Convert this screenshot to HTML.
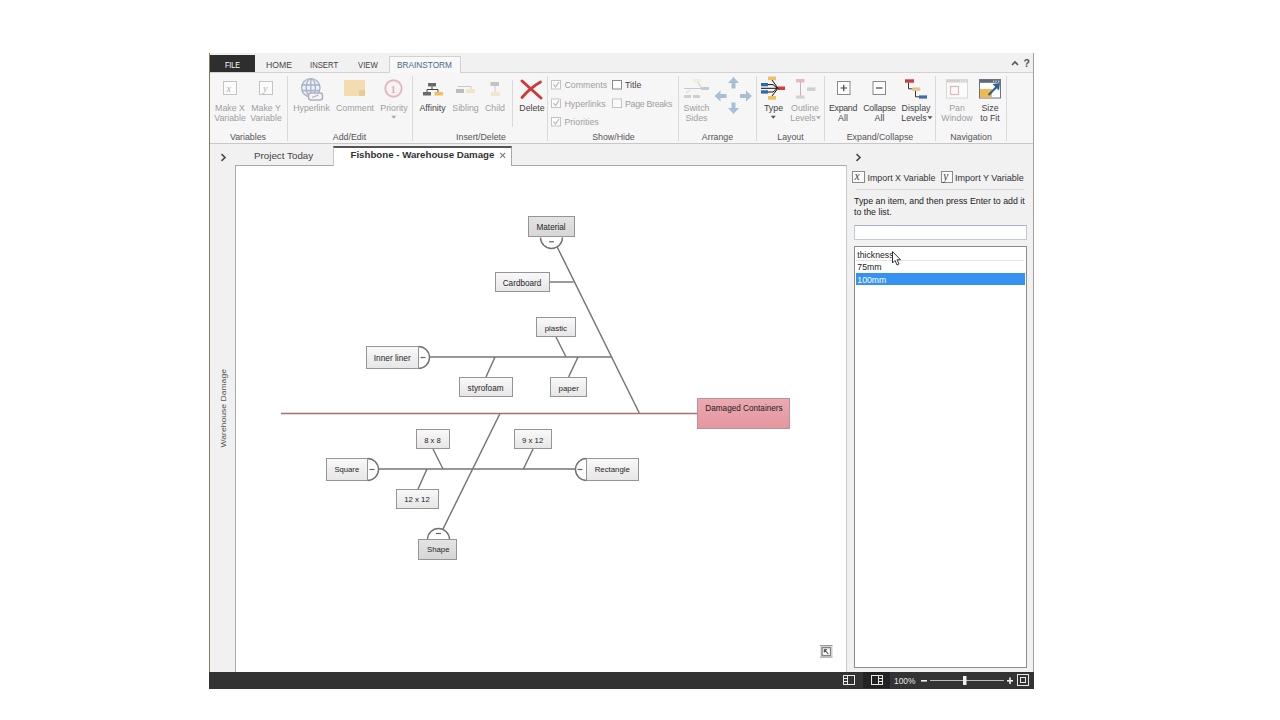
<!DOCTYPE html>
<html><head><meta charset="utf-8">
<style>
html,body{margin:0;padding:0;width:1280px;height:720px;overflow:hidden;background:#fff;font-family:"Liberation Sans",sans-serif;}
.a{position:absolute;}
.t{position:absolute;line-height:1;white-space:nowrap;color:#444;}
.rb{font-size:8.8px;color:#9e9e9e;}
.rbd{font-size:8.8px;color:#444;}
.gl{font-size:8.8px;color:#555;}
.sep{position:absolute;width:1px;background:#dadada;top:76px;height:65px;}
</style></head>
<body>
<!-- window frame -->
<div class="a" style="left:209px;top:53px;width:824px;height:635px;background:#f3f3f3;"></div>
<div class="a" style="left:209px;top:53px;width:1px;height:636px;background:#8a7a60;"></div>
<div class="a" style="left:1033px;top:53px;width:1px;height:636px;background:#a89f98;"></div>
<!-- tab row -->
<div class="a" style="left:210px;top:53px;width:823px;height:19px;background:#f1f1f1;"></div>
<div class="a" style="left:210px;top:72px;width:823px;height:1px;background:#d2d2d2;"></div>
<div class="a" style="left:210px;top:55px;width:45px;height:17px;background:#2e2e2e;"></div>
<div class="t" style="left:224.5px;top:60px;font-size:9.5px;color:#fff;transform:scaleX(0.75);transform-origin:0 0;">FILE</div>
<div class="t" style="left:265.5px;top:60px;font-size:9.5px;color:#444;transform:scaleX(0.91);transform-origin:0 0;">HOME</div>
<div class="t" style="left:310px;top:60px;font-size:9.5px;color:#444;transform:scaleX(0.81);transform-origin:0 0;">INSERT</div>
<div class="t" style="left:357.5px;top:60px;font-size:9.5px;color:#444;transform:scaleX(0.82);transform-origin:0 0;">VIEW</div>
<div class="a" style="left:389px;top:56px;width:70px;height:17px;background:#f8f8f8;border:1px solid #d2d2d2;border-bottom:none;"></div>
<div class="t" style="left:396.5px;top:60px;font-size:9.5px;color:#4a6890;transform:scaleX(0.87);transform-origin:0 0;">BRAINSTORM</div>
<svg class="a" style="left:1010px;top:59px;" width="10" height="8"><path d="M2 6 L5 3 L8 6" stroke="#555" stroke-width="1.6" fill="none"/></svg>
<div class="t" style="left:1023.6px;top:58.3px;font-size:10.5px;color:#505050;font-weight:bold;">?</div>
<!-- ribbon -->
<div class="a" style="left:210px;top:73px;width:823px;height:70px;background:#f6f6f6;"></div>
<div class="a" style="left:210px;top:143px;width:823px;height:1px;background:#c8c8c8;"></div>
<div class="sep" style="left:287px;"></div>
<div class="sep" style="left:412px;"></div>
<div class="sep" style="left:512px;top:80px;height:47px;"></div>
<div class="sep" style="left:547px;"></div>
<div class="sep" style="left:678px;"></div>
<div class="sep" style="left:756px;"></div>
<div class="sep" style="left:824px;"></div>
<div class="sep" style="left:935px;"></div>
<div class="sep" style="left:1006px;"></div>

<svg class="a" style="left:0;top:0;" width="1280" height="150" viewBox="0 0 1280 150">
<!-- Make X / Y -->
<rect x="223.5" y="81.5" width="13" height="13" fill="#fbfbfb" stroke="#c4c4c4"/>
<text x="226.5" y="91.5" font-family="Liberation Serif" font-style="italic" font-size="10" fill="#b0b0b0">x</text>
<rect x="259.5" y="81.5" width="13" height="13" fill="#fbfbfb" stroke="#c4c4c4"/>
<text x="263" y="91.5" font-family="Liberation Serif" font-style="italic" font-size="10" fill="#b0b0b0">y</text>
<!-- Hyperlink globe -->
<g stroke="#a9b5c6" stroke-width="1.4" fill="none">
<circle cx="310.8" cy="87.8" r="9.2" fill="#eaf1f8"/>
<ellipse cx="310.8" cy="87.8" rx="4.6" ry="9.2"/>
<line x1="310.8" y1="78.6" x2="310.8" y2="97"/>
<line x1="301.8" y1="85" x2="319.8" y2="85" stroke-width="1.6"/><line x1="301.8" y1="90.6" x2="319.8" y2="90.6" stroke-width="1.6"/>
</g>
<rect x="308.5" y="93" width="14" height="7" rx="2.5" fill="#f4f4f4" stroke="#b4aec4" stroke-width="1.5"/>
<path d="M312 97.5 L318.5 95" stroke="#b4aec4" stroke-width="1.3"/>
<!-- Comment -->
<rect x="344" y="80" width="21" height="16" fill="#f2dcb0"/>
<rect x="359" y="90" width="6" height="6" fill="#e8cc98"/>
<!-- Priority -->
<circle cx="393.5" cy="88.5" r="8.2" fill="#f8f2f2" stroke="#e2b6bc" stroke-width="1.9"/>
<text x="390.8" y="92.6" font-family="Liberation Serif" font-size="10" font-weight="bold" fill="#d4b0b4">1</text>
<path d="M391.3 115.8 l5 0 l-2.5 3z" fill="#a8a8a8"/>
<!-- Affinity -->
<rect x="428" y="83" width="8" height="3.5" fill="#6a6a6a"/>
<rect x="423" y="92" width="8" height="3.5" fill="#6a6a6a"/>
<rect x="434.5" y="92" width="8.5" height="3.5" fill="#f0c060"/>
<path d="M432 86.5 V89.5 M427 92 V89.5 H438 V92" stroke="#333" stroke-width="0.9" fill="none"/>
<!-- Sibling -->
<rect x="456" y="89" width="8" height="4" fill="#bdbdbd"/>
<rect x="466" y="89" width="9" height="4" fill="#f2e4c4"/>
<path d="M458 86.5 H471 V89" stroke="#c4c4c4" stroke-width="0.9" fill="none"/>
<!-- Child -->
<rect x="490.5" y="82" width="8.5" height="4" fill="#c4c4c4"/>
<rect x="491" y="92" width="9" height="4" fill="#f2e6cc"/>
<path d="M495 86 V92" stroke="#c8c8c8" stroke-width="0.9"/>
<!-- Delete -->
<path d="M522 81 Q531 89 541 98" stroke="#cc3b3b" stroke-width="3" fill="none" stroke-linecap="round"/>
<path d="M540.5 82 Q530 88 522 97.5" stroke="#cc3b3b" stroke-width="2.8" fill="none" stroke-linecap="round"/>
<!-- checkboxes -->
<g fill="#fafafa" stroke="#c4c4c4">
<rect x="551.5" y="80.5" width="9" height="8.5"/><rect x="551.5" y="99" width="9" height="8.5"/><rect x="551.5" y="117.5" width="9" height="8.5"/>
<rect x="612.5" y="99" width="9" height="8.5"/>
</g>
<rect x="612.5" y="80.5" width="9" height="8.5" fill="#fff" stroke="#8a8a8a"/>
<g stroke="#b4b4b4" stroke-width="1.1" fill="none">
<path d="M553.5 84.5 l2 2.5 l3.5 -5"/><path d="M553.5 103 l2 2.5 l3.5 -5"/><path d="M553.5 121.5 l2 2.5 l3.5 -5"/>
</g>
<!-- Switch sides -->
<g stroke="#c8c8c8" stroke-width="1" fill="none">
<line x1="684" y1="88.5" x2="707" y2="88.5"/>
<line x1="696.5" y1="80" x2="701.5" y2="88"/>
</g>
<rect x="693" y="79" width="8" height="3" fill="#f0f0d8"/>
<rect x="701" y="87" width="8" height="3" fill="#c8c8c8"/>
<rect x="684" y="95" width="7" height="3" fill="#cfcfcf"/><rect x="693" y="95" width="7" height="3" fill="#cfcfcf"/>
<line x1="686" y1="93" x2="690" y2="90" stroke="#d4d4d4"/>
<!-- arrows -->
<g fill="#a9bfd6">
<path d="M733.5 77 L739 83 L735.5 83 L735.5 88.5 L731.5 88.5 L731.5 83 L728 83 Z"/>
<path d="M733.5 114 L739 108 L735.5 108 L735.5 102.5 L731.5 102.5 L731.5 108 L728 108 Z"/>
<path d="M714.5 96 L720.5 90.5 L720.5 94 L726.5 94 L726.5 98 L720.5 98 L720.5 101.5 Z"/>
<path d="M752 96 L746 90.5 L746 94 L740 94 L740 98 L746 98 L746 101.5 Z"/>
</g>
<!-- Type -->
<rect x="768" y="76.5" width="8" height="3.7" fill="#f0c060"/>
<rect x="768" y="96" width="8" height="3.7" fill="#f0c060"/>
<rect x="761" y="83" width="7" height="3.3" fill="#2f6aa8"/>
<rect x="761" y="90.3" width="7" height="3.3" fill="#2f6aa8"/>
<rect x="778" y="86.5" width="7" height="3.5" fill="#d63a3a"/>
<g stroke="#111" stroke-width="1" fill="none">
<line x1="761" y1="88.3" x2="778" y2="88.3"/>
<path d="M772 80 L778 88.3 L772 96"/>
<path d="M768 84.6 H773 L777 88"/>
<path d="M768 92 H773 L777 88.6"/>
</g>
<path d="M770.8 115.8 l5 0 l-2.5 3z" fill="#555"/>
<!-- Outline levels -->
<rect x="796" y="79" width="8.5" height="3.5" fill="#e8b8c0"/>
<line x1="800.5" y1="82" x2="800.5" y2="96" stroke="#c8b0b4"/>
<rect x="807" y="87.4" width="8.5" height="3.5" fill="#cfcfcf"/>
<rect x="796" y="95.5" width="8.5" height="3.2" fill="#d4d4d4"/>
<path d="M816 116.3 l5 0 l-2.5 3z" fill="#aaa"/>
<!-- Expand / Collapse -->
<rect x="837.5" y="81.5" width="12.5" height="13" fill="#fdfdfd" stroke="#888"/>
<path d="M840.5 88 H847 M843.75 84.8 V91.2" stroke="#444" stroke-width="1.2"/>
<rect x="873" y="81.5" width="12.5" height="13" fill="#fdfdfd" stroke="#888"/>
<path d="M876 88 H882.5" stroke="#444" stroke-width="1.2"/>
<!-- Display levels -->
<rect x="905" y="79.3" width="9" height="3.4" fill="#c84040"/>
<rect x="912.3" y="87.4" width="8" height="3.5" fill="#ecc488"/>
<rect x="919" y="95.4" width="8" height="3.2" fill="#3b6cb0"/>
<path d="M908.5 82.7 V88.8 H912.3 M915.5 90.9 V96.8 H919" stroke="#222" stroke-width="0.9" fill="none"/>
<path d="M927.5 116.3 l5 0 l-2.5 3z" fill="#555"/>
<!-- Pan window -->
<rect x="946.5" y="79.5" width="21" height="18.5" fill="#fbfbfb" stroke="#d8d8d8"/>
<rect x="947" y="80" width="20" height="2.5" fill="#d0d0d0"/>
<rect x="950.5" y="86.5" width="8" height="8" fill="none" stroke="#e0b8b8" stroke-width="1.2"/><g fill="#f4f4f4"><rect x="960" y="80.5" width="1.2" height="1.2"/><rect x="962.5" y="80.5" width="1.2" height="1.2"/><rect x="965" y="80.5" width="1.2" height="1.2"/></g>
<!-- Size to fit -->
<rect x="979.5" y="79.5" width="21" height="18.5" fill="#fff" stroke="#6a7480"/>
<rect x="980" y="80" width="20" height="2.8" fill="#5d6b78"/>
<rect x="980" y="89" width="12" height="8.5" fill="#f0b850"/>
<path d="M988.5 95 L997 86.5" stroke="#2d5f98" stroke-width="2.2"/>
<path d="M1000 83 L992.5 84 L999 90.5 Z" fill="#2d5f98"/>
<g fill="#e8e8e8"><rect x="993" y="80.6" width="1.2" height="1.2"/><rect x="995.5" y="80.6" width="1.2" height="1.2"/><rect x="998" y="80.6" width="1.2" height="1.2"/></g>
</svg>
<!-- ribbon text -->
<div class="t rb" style="left:180.0px;top:104.05px;width:100px;text-align:center;">Make X</div>
<div class="t rb" style="left:180.0px;top:113.55px;width:100px;text-align:center;">Variable</div>
<div class="t rb" style="left:216.0px;top:104.05px;width:100px;text-align:center;">Make Y</div>
<div class="t rb" style="left:216.0px;top:113.55px;width:100px;text-align:center;">Variable</div>
<div class="t gl" style="left:198.0px;top:132.65px;width:100px;text-align:center;">Variables</div>
<div class="t rb" style="left:261.5px;top:104.05px;width:100px;text-align:center;">Hyperlink</div>
<div class="t rb" style="left:305.0px;top:104.05px;width:100px;text-align:center;">Comment</div>
<div class="t rb" style="left:344.0px;top:104.05px;width:100px;text-align:center;">Priority</div>
<div class="t gl" style="left:299.5px;top:132.65px;width:100px;text-align:center;">Add/Edit</div>
<div class="t rbd" style="left:382.5px;top:104.05px;width:100px;text-align:center;">Affinity</div>
<div class="t rb" style="left:415.5px;top:104.05px;width:100px;text-align:center;">Sibling</div>
<div class="t rb" style="left:445.0px;top:104.05px;width:100px;text-align:center;">Child</div>
<div class="t rbd" style="left:482.0px;top:104.05px;width:100px;text-align:center;">Delete</div>
<div class="t gl" style="left:431.0px;top:132.65px;width:100px;text-align:center;">Insert/Delete</div>
<div class="t rb" style="left:564.5px;top:81.25px;">Comments</div>
<div class="t rb" style="left:564.5px;top:99.75px;">Hyperlinks</div>
<div class="t rb" style="left:564.5px;top:118.25px;">Priorities</div>
<div class="t rbd" style="left:625.0px;top:81.25px;">Title</div>
<div class="t rb" style="left:625.0px;top:99.75px;letter-spacing:-0.3px;">Page Breaks</div>
<div class="t gl" style="left:563.5px;top:132.65px;width:100px;text-align:center;">Show/Hide</div>
<div class="t rb" style="left:646.5px;top:104.05px;width:100px;text-align:center;">Switch</div>
<div class="t rb" style="left:646.5px;top:113.55px;width:100px;text-align:center;">Sides</div>
<div class="t gl" style="left:667.5px;top:132.65px;width:100px;text-align:center;">Arrange</div>
<div class="t rbd" style="left:723.5px;top:104.05px;width:100px;text-align:center;">Type</div>
<div class="t rb" style="left:755.0px;top:104.05px;width:100px;text-align:center;">Outline</div>
<div class="t rb" style="left:753.0px;top:113.55px;width:100px;text-align:center;">Levels</div>
<div class="t gl" style="left:740.5px;top:132.65px;width:100px;text-align:center;">Layout</div>
<div class="t rbd" style="left:793.0px;top:104.05px;width:100px;text-align:center;letter-spacing:-0.3px;">Expand</div>
<div class="t rbd" style="left:793.0px;top:113.55px;width:100px;text-align:center;">All</div>
<div class="t rbd" style="left:829.5px;top:104.05px;width:100px;text-align:center;letter-spacing:-0.2px;">Collapse</div>
<div class="t rbd" style="left:829.5px;top:113.55px;width:100px;text-align:center;">All</div>
<div class="t rbd" style="left:866.0px;top:104.05px;width:100px;text-align:center;">Display</div>
<div class="t rbd" style="left:864.0px;top:113.55px;width:100px;text-align:center;">Levels</div>
<div class="t gl" style="left:830.0px;top:132.65px;width:100px;text-align:center;">Expand/Collapse</div>
<div class="t rb" style="left:907.0px;top:104.05px;width:100px;text-align:center;">Pan</div>
<div class="t rb" style="left:907.0px;top:113.55px;width:100px;text-align:center;">Window</div>
<div class="t rbd" style="left:940.0px;top:104.05px;width:100px;text-align:center;">Size</div>
<div class="t rbd" style="left:940.0px;top:113.55px;width:100px;text-align:center;">to Fit</div>
<div class="t gl" style="left:921.0px;top:132.65px;width:100px;text-align:center;">Navigation</div>

<!-- doc tab row -->
<div class="a" style="left:210px;top:144px;width:823px;height:21px;background:#f1f1f1;"></div>
<svg class="a" style="left:218.6px;top:152px;" width="10" height="11"><path d="M2.5 2.2 L6 5.5 L2.5 8.8" stroke="#4a4a4a" stroke-width="1.6" fill="none"/></svg>
<div class="t" style="left:254px;top:150.5px;font-size:9.8px;color:#444;">Project Today</div>
<div class="a" style="left:333px;top:146px;width:177px;height:18px;background:#fff;border-left:1px solid #c8c8c8;border-right:1px solid #a8a8a8;border-top:2px solid #555;z-index:2;"></div>
<div class="t" style="left:350.5px;top:149.8px;font-size:9.7px;color:#333;font-weight:bold;z-index:3;">Fishbone - Warehouse Damage</div>
<svg class="a" style="left:498px;top:151px;z-index:3;" width="10" height="9"><path d="M2.2 1.8 L7.2 6.8 M7.2 1.8 L2.2 6.8" stroke="#7a7a7a" stroke-width="1.1"/></svg>

<!-- left strip -->
<div class="a" style="left:210px;top:165px;width:25px;height:507px;background:#f1f1f1;"></div>
<div class="t" style="left:183.8px;top:404.2px;width:79px;font-size:8.6px;color:#555;transform:rotate(-90deg) scaleY(0.8);transform-origin:center;text-align:center;">Warehouse Damage</div>

<!-- canvas -->
<div class="a" style="left:235px;top:165px;width:610px;height:507px;background:#fff;border-left:1px solid #a8a8a8;border-top:1px solid #a8a8a8;border-right:1px solid #c8c8c8;"></div>


<!-- diagram -->
<svg class="a" style="left:0;top:0;" width="1280" height="720" viewBox="0 0 1280 720">
<defs>
<linearGradient id="gb" x1="0" y1="0" x2="0" y2="1"><stop offset="0" stop-color="#f9f9f9"/><stop offset="1" stop-color="#e6e6e6"/></linearGradient>
<linearGradient id="gd" x1="0" y1="0" x2="0" y2="1"><stop offset="0" stop-color="#e4e4e4"/><stop offset="1" stop-color="#d6d6d6"/></linearGradient>
<linearGradient id="gp" x1="0" y1="0" x2="0" y2="1"><stop offset="0" stop-color="#eaa9b1"/><stop offset="1" stop-color="#e6969f"/></linearGradient>
</defs>
<g fill="none" stroke="#747474" stroke-width="1.45">
<line x1="557.2" y1="247" x2="639.5" y2="413.5"/>
<line x1="500" y1="413.5" x2="443" y2="529"/>
<line x1="550" y1="282" x2="573.5" y2="282"/>
<line x1="429" y1="357" x2="611.5" y2="357"/>
<line x1="556" y1="337" x2="566" y2="357"/>
<line x1="486" y1="377" x2="495" y2="357"/>
<line x1="568.6" y1="377" x2="578" y2="357"/>
<line x1="378" y1="469" x2="576" y2="469"/>
<line x1="433" y1="449" x2="443" y2="469"/>
<line x1="418" y1="489" x2="427" y2="469"/>
<line x1="533" y1="449" x2="523.4" y2="469"/>
</g>
<line x1="281" y1="413.5" x2="697" y2="413.5" stroke="#a86e76" stroke-width="1.4"/>
<g stroke="#727272" stroke-width="1.4">
<path d="M540.5 237.5 A11 11 0 0 0 562.5 237.5" fill="#fff"/>
<path d="M427.5 539.5 A11 11 0 0 1 449.5 539.5" fill="#fff"/>
<path d="M418.5 346.5 A11 11 0 0 1 418.5 368.5" fill="#fff"/>
<path d="M367.5 458.5 A11 11 0 0 1 367.5 480.5" fill="#fff"/>
<path d="M586.5 458.5 A11 11 0 0 0 586.5 480.5" fill="#fff"/>
</g>
<g stroke="#959595" stroke-width="1">
<rect x="528.5" y="216.5" width="46" height="20" fill="url(#gd)"/>
<rect x="418.5" y="539.5" width="38" height="20" fill="url(#gd)"/>
<rect x="495.5" y="272.5" width="54" height="19" fill="url(#gb)"/>
<rect x="366.5" y="346.5" width="52" height="22" fill="url(#gb)"/>
<rect x="536.5" y="317.5" width="39" height="19" fill="url(#gb)"/>
<rect x="459.5" y="377.5" width="53" height="19" fill="url(#gb)"/>
<rect x="550.5" y="377.5" width="36" height="19" fill="url(#gb)"/>
<rect x="326.5" y="458.5" width="41" height="22" fill="url(#gb)"/>
<rect x="586.5" y="458.5" width="52" height="22" fill="url(#gb)"/>
<rect x="416.5" y="429.5" width="33" height="19" fill="url(#gb)"/>
<rect x="396.5" y="489.5" width="42" height="19" fill="url(#gb)"/>
<rect x="514.5" y="429.5" width="37" height="19" fill="url(#gb)"/>
<rect x="697.5" y="398.5" width="92" height="30" fill="url(#gp)" stroke="#c09098"/>
</g>
<g stroke="#666" stroke-width="1.2">
<line x1="549" y1="241.8" x2="554" y2="241.8"/>
<line x1="436" y1="533.5" x2="441" y2="533.5"/>
<line x1="420.5" y1="357.5" x2="425.5" y2="357.5"/>
<line x1="369.5" y1="469.5" x2="374.5" y2="469.5"/>
<line x1="577.5" y1="469.5" x2="582.5" y2="469.5"/>
</g>
<g font-family="Liberation Sans" fill="#262626" font-size="8.2">
<text x="536.5" y="229.5">Material</text>
<text x="427" y="552.0" font-size="7.8">Shape</text>
<text x="502.7" y="285.5">Cardboard</text>
<text x="373.8" y="361" font-size="8.3">Inner liner</text>
<text x="544.7" y="330.5" font-size="7.9">plastic</text>
<text x="467.6" y="390.8">styrofoam</text>
<text x="558.6" y="390.5" font-size="7.9">paper</text>
<text x="334.4" y="471.9" font-size="7.7">Square</text>
<text x="594.7" y="471.9" font-size="7.8">Rectangle</text>
<text x="424.2" y="442.5" font-size="7.7">8 x 8</text>
<text x="404.2" y="502.1" font-size="7.8">12 x 12</text>
<text x="522" y="442.5" font-size="7.8">9 x 12</text>
<text x="705.3" y="410.8" font-size="8.2" fill="#1e1e1e">Damaged Containers</text>
</g>
<rect x="820" y="645" width="12.5" height="1.3" fill="#9a9a9a"/><rect x="820" y="656.4" width="12.5" height="1.3" fill="#9a9a9a"/>
<rect x="820.3" y="646.3" width="12" height="10.1" fill="#f6f6f6" stroke="#d8d8d8" stroke-width="0.6"/>
<rect x="822" y="647.6" width="8.6" height="8" fill="#fff" stroke="#858585" stroke-width="1.5"/>
<path d="M824.3 649.6 L828.3 653.8 M824.3 649.6 h2.6 M824.3 649.6 v2.8" stroke="#555" stroke-width="1.1" fill="none"/>
</svg>

<!-- right panel -->
<div class="a" style="left:847px;top:165px;width:186px;height:507px;background:#f1f1f1;"></div>
<svg class="a" style="left:854.3px;top:152.3px;" width="10" height="11"><path d="M2.5 2.2 L6 5.5 L2.5 8.8" stroke="#4a4a4a" stroke-width="1.6" fill="none"/></svg>

<!-- status bar -->
<div class="a" style="left:209px;top:672px;width:825px;height:17px;background:#333;"></div>

<!-- right panel content -->
<div class="a" style="left:852px;top:171px;width:10.5px;height:10px;border:1px solid #8a8a8a;background:#fafafa;"></div>
<div class="t" style="left:854.6px;top:170.6px;font-size:11.5px;font-family:'Liberation Serif',serif;font-style:italic;color:#444;">x</div>
<div class="t" style="left:867.5px;top:174.3px;font-size:8.9px;color:#333;">Import X Variable</div>
<div class="a" style="left:940.5px;top:171px;width:10.5px;height:10px;border:1px solid #8a8a8a;background:#fafafa;"></div>
<div class="t" style="left:943.3px;top:170.6px;font-size:11.5px;font-family:'Liberation Serif',serif;font-style:italic;color:#444;">y</div>
<div class="t" style="left:955px;top:174.3px;font-size:9.05px;color:#333;">Import Y Variable</div>
<div class="a" style="left:856px;top:189px;width:168px;height:1px;background:#d6d6d6;"></div>
<div class="t" style="left:854px;top:196.5px;font-size:8.8px;color:#222;">Type an item, and then press Enter to add it</div>
<div class="t" style="left:854px;top:207.7px;font-size:8.8px;color:#222;">to the list.</div>
<div class="a" style="left:854px;top:225px;width:171px;height:13px;background:#fff;border:1px solid #c4c8d0;border-top-color:#a8b4c4;"></div>
<div class="a" style="left:854px;top:246px;width:171px;height:420px;background:#fff;border:1px solid #8c8c8c;"></div>
<div class="t" style="left:857.3px;top:251px;font-size:8.7px;color:#222;">thickness</div>
<div class="a" style="left:856px;top:260px;width:168px;height:1px;background:#e4e4e4;"></div>
<div class="t" style="left:857.3px;top:263px;font-size:8.7px;color:#222;">75mm</div>
<div class="a" style="left:856px;top:272.8px;width:169px;height:12px;background:#3592f0;"></div>
<div class="t" style="left:857.3px;top:276.1px;font-size:8.7px;color:#fff;">100mm</div>
<svg class="a" style="left:890px;top:250px;" width="14" height="18"><path d="M2.5 1.5 L2.5 13 L5 10.5 L7 15 L9 14 L7 9.8 L10.5 9.8 Z" fill="#fff" stroke="#222" stroke-width="0.9"/></svg>

<!-- status bar content -->
<div class="a" style="left:863px;top:672px;width:27px;height:16px;background:#222;"></div>
<svg class="a" style="left:0;top:660px;" width="1280" height="40" viewBox="0 660 1280 40">
<g fill="none" stroke="#e8e8e8" stroke-width="1">
<rect x="843.5" y="675.5" width="11" height="9"/>
<line x1="847.5" y1="675.5" x2="847.5" y2="684.5"/>
<rect x="871.5" y="675.5" width="11" height="9"/>
<line x1="878.5" y1="675.5" x2="878.5" y2="684.5"/>
<line x1="930" y1="680.5" x2="1004" y2="680.5" stroke="#bbb"/>
<rect x="1017.5" y="674.5" width="11" height="11"/>
<rect x="1020.5" y="677.5" width="5" height="5"/>
</g>
<g stroke="#eee" stroke-width="1">
<line x1="844" y1="678.5" x2="847" y2="678.5"/><line x1="844" y1="681.5" x2="847" y2="681.5"/>
<line x1="879" y1="678.5" x2="882" y2="678.5"/><line x1="879" y1="681.5" x2="882" y2="681.5"/>
</g>
<rect x="921" y="680" width="6" height="1.6" fill="#eee"/>
<rect x="1007" y="680" width="6" height="1.6" fill="#eee"/><rect x="1009.2" y="677.5" width="1.6" height="6.5" fill="#eee"/>
<rect x="963" y="676" width="3.5" height="9" fill="#f0f0f0"/>
</svg>
<div class="t" style="left:894px;top:677px;font-size:8.4px;color:#e8e8e8;">100%</div>


</body></html>
